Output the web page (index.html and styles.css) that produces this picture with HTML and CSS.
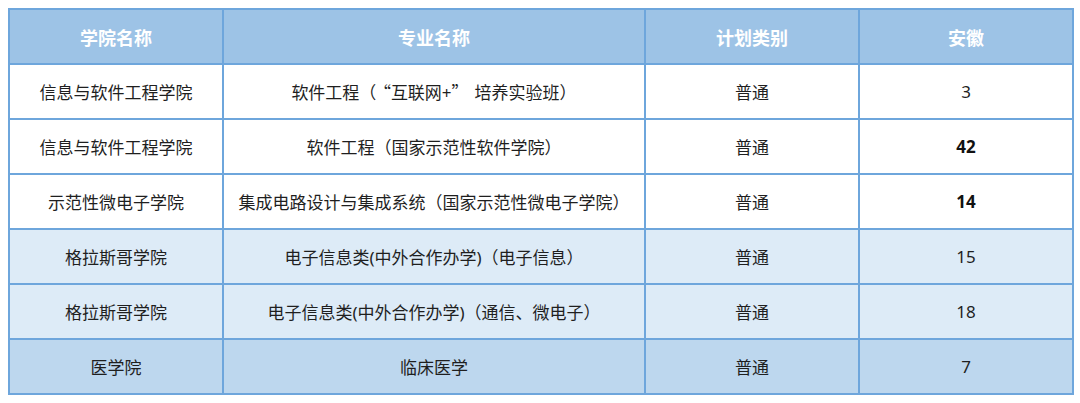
FILE: index.html
```html
<!DOCTYPE html>
<html lang="zh-CN">
<head>
<meta charset="utf-8">
<link rel="stylesheet" href="styles.css">
</head>
<body>
<table class="plan">
  <colgroup>
    <col class="c1"><col class="c2"><col class="c3"><col class="c4">
  </colgroup>
  <thead>
    <tr class="head"><th>学院名称</th><th>专业名称</th><th>计划类别</th><th>安徽</th></tr>
  </thead>
  <tbody>
    <tr class="white"><td>信息与软件工程学院</td><td>软件工程（<span class="cjk open">“</span>互联网+<span class="cjk close">”</span>培养实验班）</td><td>普通</td><td>3</td></tr>
    <tr class="white"><td>信息与软件工程学院</td><td>软件工程（国家示范性软件学院）</td><td>普通</td><td class="bold">42</td></tr>
    <tr class="white"><td>示范性微电子学院</td><td>集成电路设计与集成系统（国家示范性微电子学院）</td><td>普通</td><td class="bold">14</td></tr>
    <tr class="light"><td>格拉斯哥学院</td><td>电子信息类(中外合作办学)（电子信息）</td><td>普通</td><td>15</td></tr>
    <tr class="light"><td>格拉斯哥学院</td><td>电子信息类(中外合作办学)（通信、微电子）</td><td>普通</td><td>18</td></tr>
    <tr class="mid"><td>医学院</td><td>临床医学</td><td>普通</td><td>7</td></tr>
  </tbody>
</table>
</body>
</html>
```
FILE: styles.css
```css
html, body {
  margin: 0;
  padding: 0;
  background: #ffffff;
}
body {
  padding: 8px;
  font-family: "Noto Sans", "Noto Sans CJK SC", sans-serif;
}
.plan {
  border-collapse: collapse;
  width: 1064px;
  table-layout: fixed;
  border: 2px solid #5b9bd5;
}
.c1 { width: 214px; }
.c2 { width: 422px; }
.c3 { width: 214px; }
.c4 { width: 214px; }
.plan th, .plan td {
  border: 2px solid #6ea6dc;
  text-align: center;
  vertical-align: middle;
  padding: 0;
  height: 53px;
  font-size: 17px;
  color: #1f1f1f;
}
.plan th {
  background: #9dc3e6;
  color: #ffffff;
  font-weight: bold;
  font-size: 18px;
}
.white td { background: #ffffff; }
.light td { background: #ddebf7; }
.mid td { background: #bdd7ee; }
.plan td.bold { font-weight: bold; color: #111111; }
.cjk {
  font-family: "Noto Sans CJK SC", sans-serif;
}
.cjk.open { margin-left: 6px; }
.cjk.close { margin-right: 6px; }
```
